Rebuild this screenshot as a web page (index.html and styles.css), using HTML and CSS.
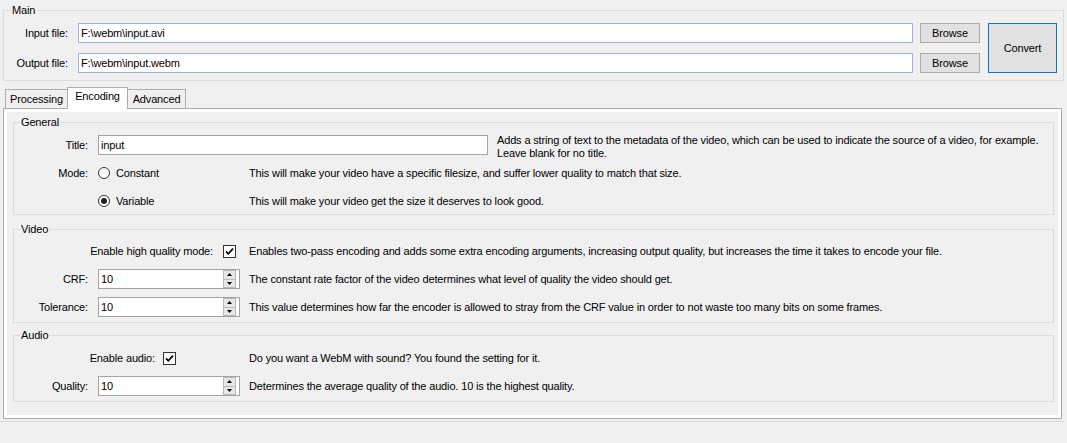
FILE: index.html
```html
<!DOCTYPE html>
<html>
<head>
<meta charset="utf-8">
<title>WebM Converter</title>
<link rel="stylesheet" href="styles.css">
</head>
<body>
<fieldset class="group main">
  <legend>Main</legend>
  <div class="main-grid">
    <label class="mlbl">Input file:</label>
    <input class="textbox tb-main" type="text" value="F:\webm\input.avi">
    <button class="btn browse">Browse</button>
    <button class="btn convert">Convert</button>
    <label class="mlbl">Output file:</label>
    <input class="textbox tb-main" type="text" value="F:\webm\input.webm">
    <button class="btn browse">Browse</button>
  </div>
</fieldset>

<div class="tabs">
  <div class="tab tab-processing">Processing</div>
  <div class="tab tab-active">Encoding</div>
  <div class="tab tab-advanced">Advanced</div>
</div>
<div class="panel">
  <div class="page">
    <fieldset class="group general">
      <legend>General</legend>
      <div class="row title-row">
        <label class="lbl">Title:</label>
        <input class="textbox title-input" type="text" value="input">
        <div class="desc">Adds a string of text to the metadata of the video, which can be used to indicate the source of a video, for example.<br>Leave blank for no title.</div>
      </div>
      <div class="row mode-row mode-first">
        <span class="lbl">Mode:</span>
        <span class="radio-wrap"><span class="radio"></span>Constant</span>
        <span class="desc">This will make your video have a specific filesize, and suffer lower quality to match that size.</span>
      </div>
      <div class="row mode-row mode-second">
        <span class="lbl"></span>
        <span class="radio-wrap"><span class="radio checked"></span>Variable</span>
        <span class="desc">This will make your video get the size it deserves to look good.</span>
      </div>
    </fieldset>

    <fieldset class="group video">
      <legend>Video</legend>
      <div class="row check-row">
        <div class="lead lead-hq">
          <span>Enable high quality mode:</span>
          <span class="check"><svg width="11" height="11" viewBox="0 0 11 11"><path d="M2 5.4 L4.3 7.8 L9 2.6" stroke="#000" stroke-width="1.7" fill="none"/></svg></span>
        </div>
        <span class="desc">Enables two-pass encoding and adds some extra encoding arguments, increasing output quality, but increases the time it takes to encode your file.</span>
      </div>
      <div class="row spin-row spin-first">
        <div class="lead">
          <span class="lbl">CRF:</span>
          <div class="spinner"><span class="spin-val">10</span><span class="spin-btns"><span class="sb sb-up"><svg width="5" height="3" viewBox="0 0 5 3"><polygon points="0,3 2.5,0 5,3" fill="#000"/></svg></span><span class="sb"><svg width="5" height="3" viewBox="0 0 5 3"><polygon points="0,0 5,0 2.5,3" fill="#000"/></svg></span></span></div>
        </div>
        <span class="desc">The constant rate factor of the video determines what level of quality the video should get.</span>
      </div>
      <div class="row spin-row spin-next">
        <div class="lead">
          <span class="lbl">Tolerance:</span>
          <div class="spinner"><span class="spin-val">10</span><span class="spin-btns"><span class="sb sb-up"><svg width="5" height="3" viewBox="0 0 5 3"><polygon points="0,3 2.5,0 5,3" fill="#000"/></svg></span><span class="sb"><svg width="5" height="3" viewBox="0 0 5 3"><polygon points="0,0 5,0 2.5,3" fill="#000"/></svg></span></span></div>
        </div>
        <span class="desc">This value determines how far the encoder is allowed to stray from the CRF value in order to not waste too many bits on some frames.</span>
      </div>
    </fieldset>

    <fieldset class="group audio">
      <legend>Audio</legend>
      <div class="row check-row">
        <div class="lead lead-audio">
          <span>Enable audio:</span>
          <span class="check"><svg width="11" height="11" viewBox="0 0 11 11"><path d="M2 5.4 L4.3 7.8 L9 2.6" stroke="#000" stroke-width="1.7" fill="none"/></svg></span>
        </div>
        <span class="desc">Do you want a WebM with sound? You found the setting for it.</span>
      </div>
      <div class="row spin-row spin-first">
        <div class="lead">
          <span class="lbl">Quality:</span>
          <div class="spinner"><span class="spin-val">10</span><span class="spin-btns"><span class="sb sb-up"><svg width="5" height="3" viewBox="0 0 5 3"><polygon points="0,3 2.5,0 5,3" fill="#000"/></svg></span><span class="sb"><svg width="5" height="3" viewBox="0 0 5 3"><polygon points="0,0 5,0 2.5,3" fill="#000"/></svg></span></span></div>
        </div>
        <span class="desc">Determines the average quality of the audio. 10 is the highest quality.</span>
      </div>
    </fieldset>
  </div>
</div>
<div class="status"></div>
</body>
</html>
```

FILE: styles.css
```css
* { box-sizing: border-box; }

html, body {
  margin: 0;
  padding: 0;
  background: #f0f0f0;
}

body {
  font: 11px/13px "Liberation Sans", Arial, sans-serif;
  letter-spacing: -0.15px;
  color: #000;
  overflow: hidden;
  width: 1067px;
  height: 443px;
}

/* group boxes */
.group {
  border: 1px solid #dcdcdc;
  margin: 0;
  padding: 0 4px 5px 6px;
  min-width: 0;
}

.group legend {
  padding: 0 1px;
  line-height: 14px;
}

.main {
  margin: 3px 3px 0 3px;
  padding: 6px 6px 7px 7px;
}

.main-grid {
  display: grid;
  grid-template-columns: 57px 1fr 60px 77px;
  grid-template-rows: 20px 20px;
  row-gap: 10px;
}

.mlbl {
  text-align: right;
  line-height: 20px;
  white-space: nowrap;
}

.textbox {
  font: inherit;
  letter-spacing: inherit;
  color: #000;
  height: 20px;
  margin: 0;
  padding: 0 2px;
  border: 1px solid #a3a3a3;
  background: #fff;
  outline: none;
}

.tb-main {
  margin: 0 7px 0 10px;
  border-color: #9fb3d1;
  width: auto;
  min-width: 0;
}

.btn {
  font: inherit;
  letter-spacing: inherit;
  color: #000;
  background: #e1e1e1;
  border: 1px solid #adadad;
  margin: 0;
  padding: 0;
}

.convert {
  grid-column: 4;
  grid-row: 1 / 3;
  margin-left: 8px;
  border-color: #0078d7;
}

/* tabs */
.tabs {
  display: flex;
  align-items: flex-end;
  height: 22px;
  margin: 6px 0 -1px 5px;
  position: relative;
  z-index: 1;
}

.tab {
  height: 20px;
  background: #f0f0f0;
  border: 1px solid #acacac;
  display: flex;
  align-items: center;
  justify-content: center;
  white-space: nowrap;
}

.tab-processing {
  width: 62px;
  border-right: none;
}

.tab-active {
  width: 61px;
  height: 22px;
  background: #fff;
  border-bottom: none;
  padding-bottom: 4px;
}

.tab-advanced {
  width: 58px;
  border-left: none;
}

.panel {
  margin: 0 5px 0 3px;
  height: 311px;
  border: 1px solid #acacac;
  background: #fff;
  padding: 3px;
  display: flex;
  flex-direction: column;
}

.page {
  flex: 1;
  background: #f0f0f0;
  padding: 3px 4px 0 6px;
}

.status {
  margin: 2px 2px 0 0;
  border-top: 1px solid #d9d9d9;
}

/* rows */
.row {
  display: flex;
  align-items: center;
}

.lbl {
  width: 68px;
  margin-right: 10px;
  text-align: right;
  flex: none;
  white-space: nowrap;
}

.desc {
  white-space: nowrap;
}

.general { padding-top: 5px; }

.title-row { align-items: flex-start; }
.title-row .lbl { line-height: 20px; margin-top: 1px; }

.title-input {
  width: 390px;
  margin-top: 1px;
  margin-right: 9px;
  flex: none;
}

.mode-row { height: 16px; }
.mode-first { margin-top: 5px; }
.mode-second { margin-top: 12px; }

.radio-wrap {
  width: 142px;
  margin-right: 9px;
  display: flex;
  align-items: center;
  flex: none;
}

.radio {
  width: 12px;
  height: 12px;
  border: 1px solid #333;
  border-radius: 50%;
  background: #fff;
  margin-right: 6px;
  display: flex;
  align-items: center;
  justify-content: center;
}

.radio.checked::after {
  content: "";
  width: 6px;
  height: 6px;
  border-radius: 50%;
  background: #222;
}

.video { margin-top: 7px; padding-top: 7px; }
.audio { margin-top: 5px; padding-top: 8px; }

.lead {
  width: 220px;
  flex: none;
  margin-right: 9px;
  display: flex;
  align-items: center;
  justify-content: flex-end;
  white-space: nowrap;
}

.check-row { height: 16px; }
.lead-hq { padding-right: 4px; gap: 10px; }
.lead-audio { padding-right: 64px; gap: 8px; }

.check {
  width: 13px;
  height: 13px;
  border: 1px solid #333;
  background: #fff;
  display: inline-flex;
  flex: none;
}

.spin-first { margin-top: 10px; }
.spin-next { margin-top: 8px; }

.spinner {
  width: 142px;
  height: 20px;
  flex: none;
  border: 1px solid #a3a3a3;
  background: #fff;
  display: flex;
  padding-right: 3px;
}

.spin-val {
  flex: 1;
  padding-left: 2px;
  line-height: 18px;
}

.spin-btns {
  width: 13px;
  display: flex;
  flex-direction: column;
  border: 1px solid #b9b9b9;
  background: #e6e6e6;
}

.sb {
  flex: 1;
  display: flex;
  align-items: center;
  justify-content: center;
}

.sb-up { border-bottom: 1px solid #b9b9b9; }
```
